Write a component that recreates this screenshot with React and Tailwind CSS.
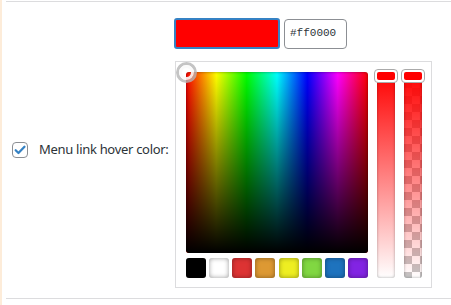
import React from 'react';

const swatches = ['#000000', '#ffffff', '#dd3333', '#dd9933', '#eeee22', '#81d742', '#1e73be', '#8224e3'];

const SliderHandle = ({ fill }) => (
  <div className="absolute -top-[3px] -left-[3px] w-[24px] h-[14px] rounded-[4px] border border-[#aaaaaa] bg-white p-[2px]">
    <div className="w-full h-full rounded-[2px]" style={{ background: fill }} />
  </div>
);

const App = () => {
  return (
    <div className="w-[451px] h-[305px] bg-white border-l-2 border-[#fdecd9] overflow-hidden font-['Noto_Sans',sans-serif]">
      <div className="ml-[4px] mt-px h-px bg-[#dcdcde]" />

      <div className="flex items-center">
        {/* Label column */}
        <div className="w-[172px] flex items-center pl-[10px] gap-[11px]">
          <div className="w-4 h-4 rounded-[4px] border border-[#8c8f94] bg-white flex items-center justify-center">
            <svg width="14" height="14" viewBox="0 0 20 20">
              <path d="M3.8 10.3l4 4L16.4 5.3" fill="none" stroke="#3582c4" strokeWidth="3.2" strokeLinecap="round" strokeLinejoin="round" />
            </svg>
          </div>
          <span className="text-[13px] text-[#2c3338] tracking-[-0.3px]">Menu link hover color:</span>
        </div>

        {/* Picker column */}
        <div className="pt-4 pb-[10px]">
          <div className="flex items-center gap-[4px]">
            <button className="w-[106px] h-[31px] rounded-[3px] border-2 border-[#3582c4] bg-[#ff0000]" />
            <div className="w-[63px] h-[30px] rounded-[4px] border border-[#8c8f94] bg-white flex items-center pl-[5px] font-['Liberation_Mono',monospace] text-[11px] text-[#2c3338]">
              #ff0000
            </div>
          </div>

          <div className="ml-px mt-[12px] w-[257px] border border-[#dcdcde] bg-white pt-[10px] pl-[10px] pr-[9px] pb-[9px] flex gap-[9px]">
            <div className="w-[182px] flex flex-col gap-[5px]">
              <div className="relative w-[182px] h-[181px] rounded-[3px] bg-[linear-gradient(to_right,#ff0000,#ffff00,#00ff00,#00ffff,#0000ff,#ff00ff,#ff0000)]">
                <div className="absolute inset-0 rounded-[3px] bg-[linear-gradient(to_bottom,rgba(0,0,0,0),#000000)] shadow-[inset_0_0_3px_rgba(0,0,0,0.45)]" />
                <div className="absolute -top-[10px] -left-[10px] w-[21px] h-[21px] rounded-full border-[3px] border-[#b5b5b5]/80 flex items-center justify-center">
                  <div className="w-[15px] h-[15px] rounded-full border-[3px] border-[#f9f9f9]/90" />
                </div>
              </div>
              <div className="flex justify-between">
                {swatches.map((c) => (
                  <div
                    key={c}
                    className="w-[20px] h-[20px] rounded-[3px] shadow-[inset_0_0_5px_rgba(0,0,0,0.4)]"
                    style={{ background: c }}
                  />
                ))}
              </div>
            </div>

            <div className="relative w-[18px] h-[206px]">
              <div className="w-full h-full rounded-[3px] bg-[linear-gradient(to_bottom,#ff0000,#ffffff)] shadow-[inset_0_0_3px_rgba(0,0,0,0.35)]" />
              <SliderHandle fill="#ff0000" />
            </div>

            <div className="relative w-[18px] h-[206px]">
              <div className="w-full h-full rounded-[3px] overflow-hidden bg-[conic-gradient(#c4c4c4_25%,#ffffff_0_50%,#c4c4c4_0_75%,#ffffff_0)] bg-[length:16px_16px]">
                <div className="w-full h-full bg-[linear-gradient(to_bottom,#ff0000,rgba(255,0,0,0))] shadow-[inset_0_0_3px_rgba(0,0,0,0.35)]" />
              </div>
              <SliderHandle fill="#ff0000" />
            </div>
          </div>
        </div>
      </div>

      <div className="ml-[4px] h-px bg-[#dcdcde]" />
    </div>
  );
};

export default App;
